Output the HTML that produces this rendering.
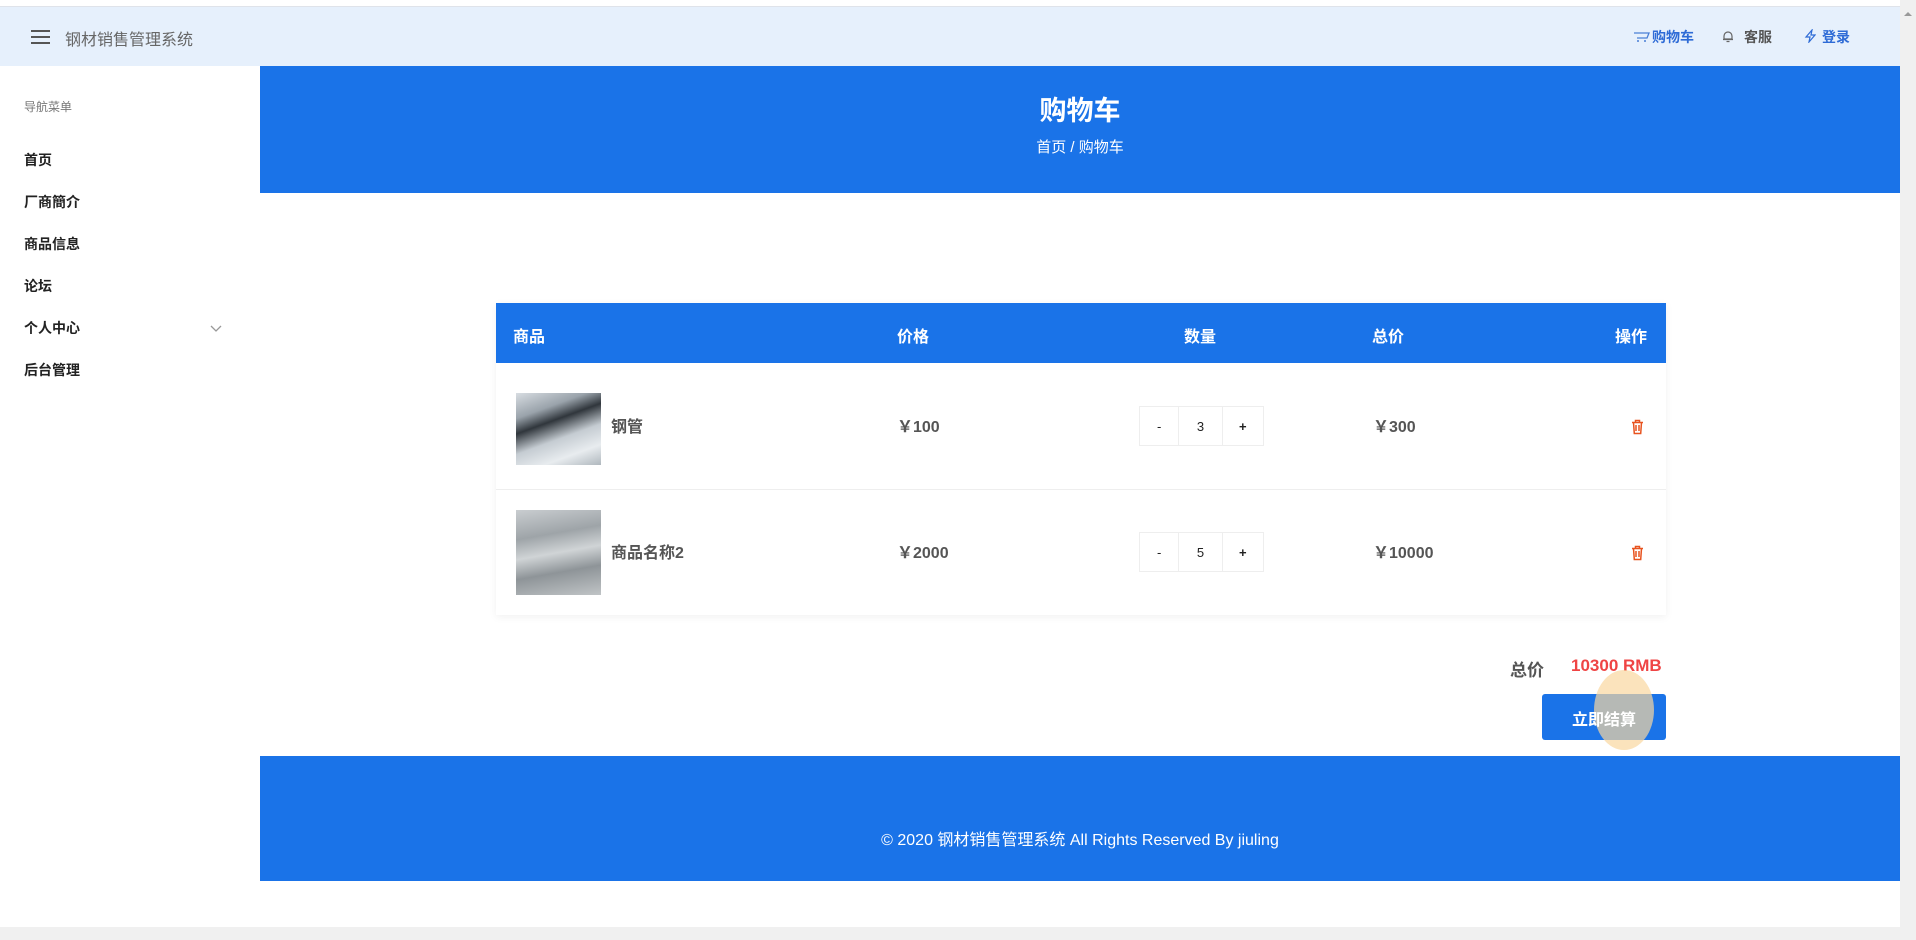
<!DOCTYPE html>
<html><head><meta charset="utf-8"><style>
*{margin:0;padding:0;box-sizing:border-box}
body{width:1916px;height:940px;overflow:hidden;background:#fff;font-family:"Liberation Sans","Noto Sans CJK SC",sans-serif;position:relative;color:#333}
.a{position:absolute;white-space:nowrap}
.hdr{left:0;top:6px;width:1900px;height:60px;background:#e6f0fc;border-top:1px solid #dfe3ea}
.side{font-size:14px;font-weight:bold;color:#222;left:24px}
.blue{background:#1a73e8}
.th{color:#fff;font-weight:bold;font-size:16px;top:323px}
.td{color:#555;font-weight:bold;font-size:16px}
.qty{border:1px solid #eee;height:40px;display:flex;font-size:13px;color:#222}
.qty div{display:flex;align-items:center;justify-content:center;border-right:1px solid #eee}
.qty div:last-child{border-right:none}
</style></head><body>
<div class="a hdr"></div>
<div class="a" style="left:31px;top:30px;width:19px;height:2px;background:#555;box-shadow:0 6px 0 #555,0 12px 0 #555"></div>
<div class="a" style="left:65px;top:26px;font-size:16px;color:#666">钢材销售管理系统</div>
<svg class="a" style="left:1633px;top:31px" width="18" height="12" viewBox="0 0 18 12"><path d="M1 2h15l-2 5H4" fill="none" stroke="#4a7fd6" stroke-width="1.3"/><circle cx="5" cy="10" r="1" fill="#4a7fd6"/><circle cx="12" cy="10" r="1" fill="#4a7fd6"/></svg>
<div class="a" style="left:1652px;top:27px;font-size:14px;color:#2e6bd6;font-weight:bold">购物车</div>
<svg class="a" style="left:1722px;top:30px" width="12" height="13" viewBox="0 0 12 13"><path d="M2 9V6a4 4 0 0 1 8 0v3zM1 9.5h10M4.5 11.5h3" fill="none" stroke="#666" stroke-width="1.2"/></svg>
<div class="a" style="left:1744px;top:27px;font-size:14px;color:#555;font-weight:bold">客服</div>
<svg class="a" style="left:1804px;top:29px" width="12" height="14" viewBox="0 0 12 14"><path d="M8 1L2 8h4l-1 5 6-7H7z" fill="none" stroke="#2e6bd6" stroke-width="1.2"/></svg>
<div class="a" style="left:1822px;top:27px;font-size:14px;color:#2e6bd6;font-weight:bold">登录</div>
<div class="a" style="left:1900px;top:0;width:16px;height:927px;background:#f0f0f0"></div>
<div class="a" style="left:1904px;top:12px;width:0;height:0;border:4px solid transparent;border-bottom-color:#999;border-top:0"></div>
<div class="a" style="left:0;top:927px;width:1916px;height:13px;background:#f0f0f0"></div>

<div class="a" style="left:24px;top:98px;font-size:12px;color:#777">导航菜单</div>
<div class="a side" style="top:150px">首页</div>
<div class="a side" style="top:192px">厂商簡介</div>
<div class="a side" style="top:234px">商品信息</div>
<div class="a side" style="top:276px">论坛</div>
<div class="a side" style="top:318px">个人中心</div>
<svg class="a" style="left:210px;top:325px" width="12" height="8" viewBox="0 0 12 8"><path d="M1 1l5 5 5-5" fill="none" stroke="#999" stroke-width="1.3"/></svg>
<div class="a side" style="top:360px">后台管理</div>

<div class="a blue" style="left:260px;top:66px;width:1640px;height:127px"></div>
<div class="a" style="left:260px;width:1640px;text-align:center;top:89px;font-size:27px;font-weight:bold;color:#fff">购物车</div>
<div class="a" style="left:260px;width:1640px;text-align:center;top:136px;font-size:15px;color:#fff">首页 / 购物车</div>

<div class="a" style="left:496px;top:303px;width:1170px;height:312px;box-shadow:0 2px 8px rgba(0,0,0,.06)"></div>
<div class="a blue" style="left:496px;top:303px;width:1170px;height:60px"></div>
<div class="a th" style="left:513px">商品</div>
<div class="a th" style="left:897px">价格</div>
<div class="a th" style="left:1184px">数量</div>
<div class="a th" style="left:1372px">总价</div>
<div class="a th" style="left:1615px">操作</div>
<div class="a" style="left:496px;top:489px;width:1170px;height:1px;background:#eee"></div>

<div class="a" style="left:516px;top:393px;width:85px;height:72px;background:linear-gradient(160deg,#d8dde2 0%,#9aa3ab 25%,#30363c 40%,#c5ccd2 60%,#e8ecef 80%,#b0b8be 100%)"></div>
<div class="a td" style="left:611px;top:413px">钢管</div>
<div class="a td" style="left:897px;top:413px">￥100</div>
<div class="a qty" style="left:1139px;top:406px;width:125px"><div style="width:40px">-</div><div style="width:44px">3</div><div style="width:41px;font-weight:bold">+</div></div>
<div class="a td" style="left:1373px;top:413px">￥300</div>

<div class="a" style="left:516px;top:510px;width:85px;height:85px;background:linear-gradient(170deg,#c9cdd0 0%,#9ea4a8 30%,#d0d4d6 50%,#8e9498 70%,#c0c4c6 100%)"></div>
<div class="a td" style="left:611px;top:539px">商品名称2</div>
<div class="a td" style="left:897px;top:539px">￥2000</div>
<div class="a qty" style="left:1139px;top:532px;width:125px"><div style="width:40px">-</div><div style="width:44px">5</div><div style="width:41px;font-weight:bold">+</div></div>
<div class="a td" style="left:1373px;top:539px">￥10000</div>

<svg class="a" style="left:1631px;top:419px" width="13" height="16" viewBox="0 0 13 16"><path d="M1 3.5h11M4.5 3.5V1.5h4v2M2.5 3.5l.8 11h6.4l.8-11M5 6v6M8 6v6" fill="none" stroke="#e8531f" stroke-width="1.5"/></svg>
<svg class="a" style="left:1631px;top:545px" width="13" height="16" viewBox="0 0 13 16"><path d="M1 3.5h11M4.5 3.5V1.5h4v2M2.5 3.5l.8 11h6.4l.8-11M5 6v6M8 6v6" fill="none" stroke="#e8531f" stroke-width="1.5"/></svg>

<div class="a" style="left:1510px;top:656px;font-size:17px;font-weight:bold;color:#555">总价</div>
<div class="a" style="left:1571px;top:656px;font-size:17px;font-weight:bold;color:#ef4444">10300 RMB</div>
<div class="a blue" style="left:1542px;top:694px;width:124px;height:46px;border-radius:3px"></div>
<div class="a" style="left:1594px;top:670px;width:60px;height:80px;border-radius:50%;background:rgba(250,215,160,.7)"></div>
<div class="a" style="left:1542px;top:706px;width:124px;text-align:center;font-size:16px;font-weight:bold;color:#fff">立即结算</div>

<div class="a blue" style="left:260px;top:756px;width:1640px;height:125px"></div>
<div class="a" style="left:260px;width:1640px;text-align:center;top:826px;font-size:16px;color:#fff">© 2020 钢材销售管理系统 All Rights Reserved By jiuling</div>
</body></html>
